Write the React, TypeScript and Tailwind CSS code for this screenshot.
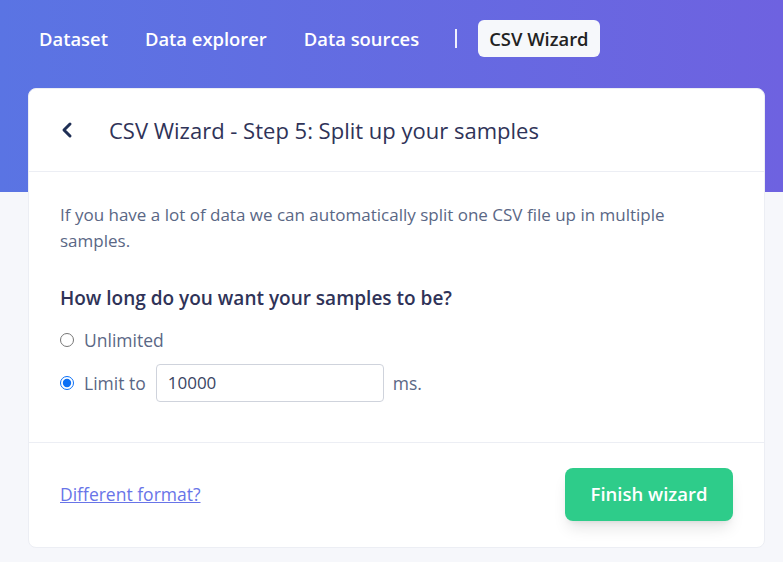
import { ChevronLeft } from "lucide-react";

const navItems = ["Dataset", "Data explorer", "Data sources"];

export default function App() {
  return (
    <div className="min-h-screen bg-[#f6f7fb] bg-[linear-gradient(to_right,#5a74e3,#6e62e0)] bg-no-repeat bg-[length:100%_192px] font-['Open_Sans',sans-serif]">
      {/* Top nav */}
      <nav className="flex items-center gap-[15px] px-[28px] pt-[20px]">
        {navItems.map((item) => (
          <a key={item} className="flex h-[37px] items-center px-[11px] text-[18.4px] font-semibold text-white">
            {item}
          </a>
        ))}
        <span className="ml-[10px] mr-[6px] h-[19px] w-[2px] bg-white/90" />
        <a className="flex h-[37px] items-center rounded-md bg-[#f6f8fb] px-[11px] text-[18.4px] font-semibold text-[#222]">
          CSV Wizard
        </a>
      </nav>

      {/* Wizard card */}
      <div className="ml-[28px] mt-[31px] w-[737px] rounded-lg border border-[#eceef4] bg-white">
        <div className="flex h-[83px] items-center gap-[30px] border-b border-[#eceef4] px-[26px]">
          <ChevronLeft className="h-[24px] w-[24px] text-[#1f2f55]" strokeWidth={3} />
          <h1 className="text-[22px] font-medium text-[#2f3358]">CSV Wizard - Step 5: Split up your samples</h1>
        </div>

        <div className="border-b border-[#eceef4] px-[31px] pb-[40px] pt-[30px] text-[#5a6785]">
          <p className="text-[17px] leading-[26px]">
            If you have a lot of data we can automatically split one CSV file up in multiple samples.
          </p>
          <h2 className="mt-[30px] text-[19px] font-semibold text-[#2f3358]">How long do you want your samples to be?</h2>
          <label className="mt-[14px] flex items-center gap-[10px] text-[17.5px]">
            <input type="radio" name="len" className="h-[14px] w-[14px]" />
            Unlimited
          </label>
          <div className="mt-[11px] flex items-center gap-[10px] text-[17.5px]">
            <input type="radio" name="len" defaultChecked className="h-[14px] w-[14px] accent-[#0b6ff5]" />
            <span>Limit to</span>
            <input
              type="text"
              defaultValue="10000"
              className="h-[38px] w-[228px] rounded border border-[#cfd3dc] px-[11px] text-[17px] text-[#3a4563] outline-none"
            />
            <span className="ml-[-1px]">ms.</span>
          </div>
        </div>

        <div className="flex items-center justify-between px-[31px] pb-[26px] pt-[25px]">
          <a href="#" className="text-[17.5px] text-[#6874e8] underline">
            Different format?
          </a>
          <button className="h-[53px] w-[168px] rounded-lg bg-[#2ecc8a] text-[18.5px] font-semibold text-white shadow-lg">
            Finish wizard
          </button>
        </div>
      </div>
    </div>
  );
}
